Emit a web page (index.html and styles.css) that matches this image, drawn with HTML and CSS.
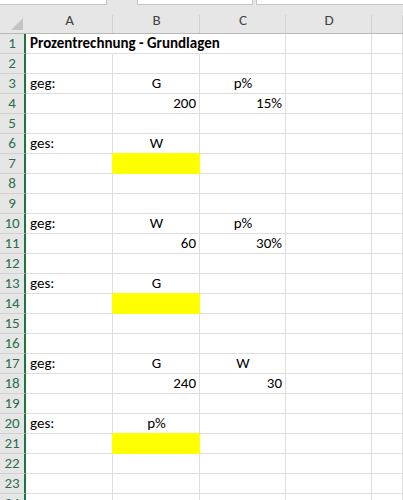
FILE: index.html
```html
<!DOCTYPE html>
<html lang="de">
<head>
    <meta charset="UTF-8">
    <title>Prozentrechnung - Grundlagen</title>
    <link rel="stylesheet" href="styles.css">
</head>
<body>

<!-- Leiste über den Spaltenköpfen -->
<div class="toolbar">
    <div class="tb-box tb-name"></div>
    <div class="tb-box tb-mid"></div>
    <div class="tb-box tb-formula"></div>
</div>

<div class="sheet">
    <!-- Spaltenköpfe -->
    <div class="corner"><span class="corner-tri"></span></div>
    <div class="ch">A</div>
    <div class="ch">B</div>
    <div class="ch">C</div>
    <div class="ch">D</div>
    <div class="ch"></div>

    <div class="rh">1</div>
    <div class="c title no-line">Prozentrechnung - Grundlagen</div>
    <div class="c no-line"></div>
    <div class="c"></div><div class="c"></div><div class="c"></div>

    <div class="rh">2</div>
    <div class="c"></div><div class="c"></div><div class="c"></div><div class="c"></div><div class="c"></div>

    <div class="rh">3</div>
    <div class="c">geg:</div>
    <div class="c center">G</div>
    <div class="c center">p%</div>
    <div class="c"></div><div class="c"></div>

    <div class="rh">4</div>
    <div class="c"></div>
    <div class="c num">200</div>
    <div class="c num">15%</div>
    <div class="c"></div><div class="c"></div>

    <div class="rh">5</div>
    <div class="c"></div><div class="c"></div><div class="c"></div><div class="c"></div><div class="c"></div>

    <div class="rh">6</div>
    <div class="c">ges:</div>
    <div class="c center">W</div>
    <div class="c"></div><div class="c"></div><div class="c"></div>

    <div class="rh">7</div>
    <div class="c"></div>
    <div class="c result"></div>
    <div class="c"></div><div class="c"></div><div class="c"></div>

    <div class="rh">8</div>
    <div class="c"></div><div class="c"></div><div class="c"></div><div class="c"></div><div class="c"></div>

    <div class="rh">9</div>
    <div class="c"></div><div class="c"></div><div class="c"></div><div class="c"></div><div class="c"></div>

    <div class="rh">10</div>
    <div class="c">geg:</div>
    <div class="c center">W</div>
    <div class="c center">p%</div>
    <div class="c"></div><div class="c"></div>

    <div class="rh">11</div>
    <div class="c"></div>
    <div class="c num">60</div>
    <div class="c num">30%</div>
    <div class="c"></div><div class="c"></div>

    <div class="rh">12</div>
    <div class="c"></div><div class="c"></div><div class="c"></div><div class="c"></div><div class="c"></div>

    <div class="rh">13</div>
    <div class="c">ges:</div>
    <div class="c center">G</div>
    <div class="c"></div><div class="c"></div><div class="c"></div>

    <div class="rh">14</div>
    <div class="c"></div>
    <div class="c result"></div>
    <div class="c"></div><div class="c"></div><div class="c"></div>

    <div class="rh">15</div>
    <div class="c"></div><div class="c"></div><div class="c"></div><div class="c"></div><div class="c"></div>

    <div class="rh">16</div>
    <div class="c"></div><div class="c"></div><div class="c"></div><div class="c"></div><div class="c"></div>

    <div class="rh">17</div>
    <div class="c">geg:</div>
    <div class="c center">G</div>
    <div class="c center">W</div>
    <div class="c"></div><div class="c"></div>

    <div class="rh">18</div>
    <div class="c"></div>
    <div class="c num">240</div>
    <div class="c num">30</div>
    <div class="c"></div><div class="c"></div>

    <div class="rh">19</div>
    <div class="c"></div><div class="c"></div><div class="c"></div><div class="c"></div><div class="c"></div>

    <div class="rh">20</div>
    <div class="c">ges:</div>
    <div class="c center">p%</div>
    <div class="c"></div><div class="c"></div><div class="c"></div>

    <div class="rh">21</div>
    <div class="c"></div>
    <div class="c result"></div>
    <div class="c"></div><div class="c"></div><div class="c"></div>

    <div class="rh">22</div>
    <div class="c"></div><div class="c"></div><div class="c"></div><div class="c"></div><div class="c"></div>

    <div class="rh">23</div>
    <div class="c"></div><div class="c"></div><div class="c"></div><div class="c"></div><div class="c"></div>

    <div class="rh">24</div>
    <div class="c"></div><div class="c"></div><div class="c"></div><div class="c"></div><div class="c"></div>
</div>

</body>
</html>
```

FILE: styles.css
```css
html, body {
    margin: 0;
    height: 500px;
    overflow: hidden;
    background-color: #ffffff;
}

body {
    font-family: Carlito, "Liberation Sans", Arial, sans-serif;
    font-size: 15px;
    color: #000;
}

/* obere Leiste */
.toolbar {
    display: flex;
    height: 5px;
    background-color: #e6e6e6;
}

.tb-box {
    height: 4px;
    background-color: #fff;
    border-bottom: 1px solid #c6c6c6;
    box-sizing: content-box;
}

.tb-name {
    width: 106px;
    border-right: 1px solid #c6c6c6;
}

.tb-mid {
    width: 114px;
    margin-left: 30px;
    border-left: 1px solid #c6c6c6;
    border-right: 1px solid #c6c6c6;
}

.tb-formula {
    flex: 1;
    margin-left: 3px;
    border-left: 1px solid #c6c6c6;
}

/* Tabelle */
.sheet {
    display: grid;
    grid-template-columns: 26px 87px 87px 86px 86px 1fr;
    grid-template-rows: 29px;
    grid-auto-rows: 20px;
}

.corner,
.ch {
    background-color: #e6e6e6;
    border-bottom: 1px solid #b9b9b9;
    box-sizing: border-box;
}

.corner {
    display: flex;
    justify-content: flex-end;
    align-items: flex-end;
    padding: 0 3px 3px 0;
}

.corner-tri {
    width: 0;
    height: 0;
    border-left: 12px solid transparent;
    border-bottom: 12px solid #c4c4c4;
}

.ch {
    display: flex;
    justify-content: center;
    align-items: flex-end;
    padding-bottom: 4px;
    color: #444;
    font-size: 15px;
    background: linear-gradient(#d2d2d2, #d2d2d2) right bottom / 1px 18px no-repeat, #e6e6e6;
}

.rh {
    display: flex;
    justify-content: center;
    align-items: flex-end;
    padding-bottom: 1px;
    box-sizing: border-box;
    background-color: #e6e6e6;
    border-right: 2px solid #217346;
    border-bottom: 1px solid #d0d0d0;
    color: #2b6e4d;
    font-size: 15px;
}

.c {
    display: flex;
    align-items: flex-end;
    box-sizing: border-box;
    padding: 0 3px 1px 4px;
    border-right: 1px solid #dedede;
    border-bottom: 1px solid #dedede;
    white-space: nowrap;
    line-height: 18px;
}

.c.no-line {
    border-right-color: transparent;
}

.title {
    font-weight: bold;
    overflow: visible;
}

.center {
    justify-content: center;
}

.num {
    justify-content: flex-end;
}

.result {
    background-color: #ffff00;
    border-color: #ffff00;
    box-shadow: -1px -1px 0 #ffff00;
}
```
